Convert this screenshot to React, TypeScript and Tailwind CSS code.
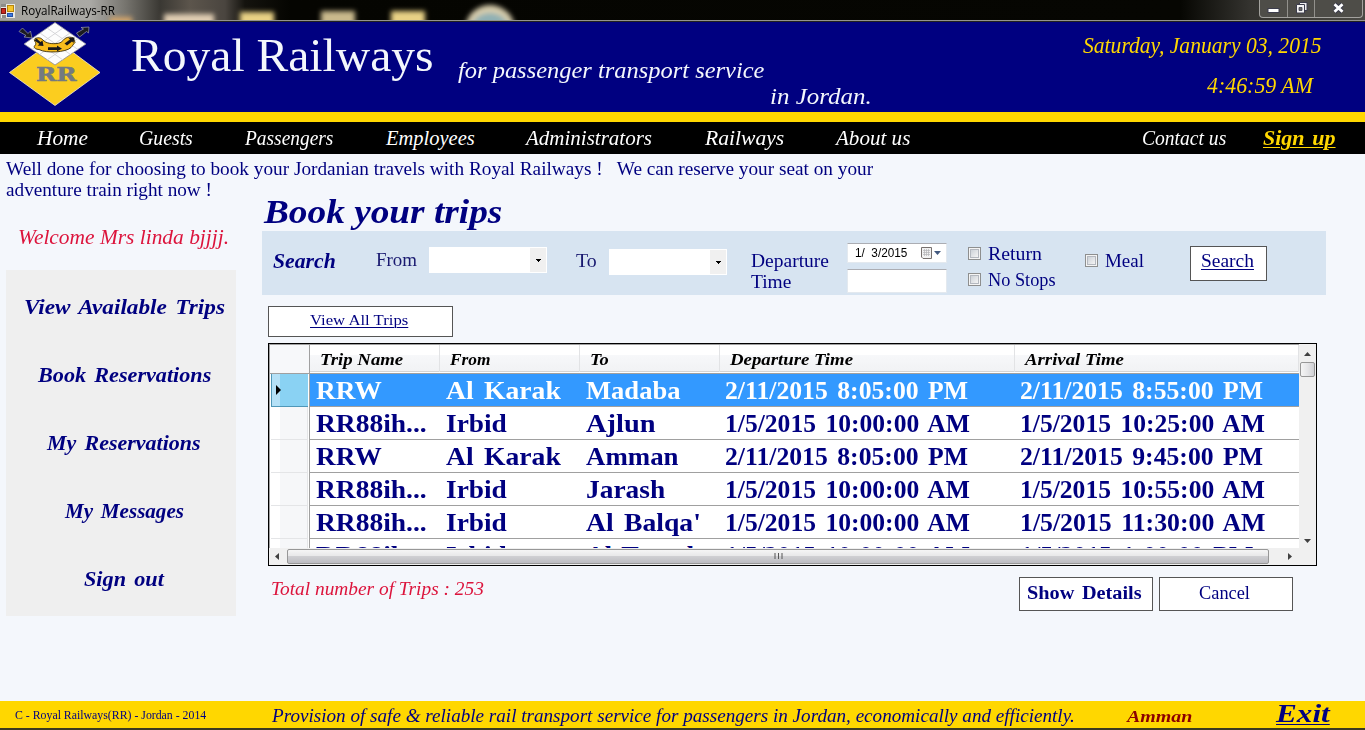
import { useLayoutEffect, useRef, useState } from "react";
import type { ReactNode } from "react";

/* A single line of type, widened or narrowed so that it fills the given measure. */
function Line({ w, className = "", children }: { w: number; className?: string; children: string }) {
  const ref = useRef<HTMLSpanElement>(null);
  const [scale, setScale] = useState(1);
  useLayoutEffect(() => {
    const el = ref.current;
    if (el) setScale(w / el.offsetWidth);
  }, [w, children]);
  return (
    <span className={"block shrink-0 text-left leading-6 whitespace-pre " + className} style={{ width: w }}>
      <span
        ref={ref}
        className="inline-block origin-left align-top [text-decoration:inherit] [text-underline-offset:inherit]"
        style={{ transform: `scaleX(${scale})` }}
      >
        {children}
      </span>
    </span>
  );
}

function AppIcon() {
  return (
    <svg className="ml-px mt-1 h-[14px] w-[14px] shrink-0" viewBox="0 0 14 14">
      <rect width="14" height="14" fill="#e8e8e4" />
      <rect x="0.5" y="4.5" width="4" height="5" fill="#c8281e" stroke="#7a1410" />
      <rect x="6.5" y="1.5" width="6" height="6" fill="#f6c62c" stroke="#b8860b" />
      <rect x="6.5" y="9.5" width="5" height="3" fill="#3a78e0" stroke="#2450a8" />
      <path d="M0 0h5v3H0zM1 11h4v3H1z" fill="#8c8c88" />
    </svg>
  );
}

function Logo() {
  return (
    <svg className="h-[90px] w-[110px] shrink-0" viewBox="0 22 110 90">
      <path d="M55 39L100 72.5L55 105.5L9.5 72.5Z" fill="#fbcd1f" stroke="#f5ecd0" strokeWidth="0.8" />
      <path d="M55 22.5L86 44L55 65L24 44Z" fill="#fdfdfd" stroke="#8a8a96" strokeWidth="0.8" />
      <path
        d="M47 28L78 49.5M40 33L70.5 54.5M32 38.5L63 60M63 28L32 49.5M70 33L39.5 54.5M78 38.5L47 60"
        stroke="#d2d2d6"
        strokeWidth="0.9"
      />
      <path
        d="M35 38.500C39 37 41 38 43 40C46 43.500 52 44 57 43.500C62 43 63 40 65 38.500C68 36.500 71 37 73.500 38L75 42.500C73 44.500 72.500 46 71 47.500C66 52.500 46 53.500 39 49.500C36 49.500 34 48 34 46.500C36 45 36.500 43 34.500 41Z"
        fill="#f9bd1c"
        stroke="#3a2c08"
        strokeWidth="0.9"
      />
      <g fill="#1a1b20" stroke="#b4b4bc" strokeWidth="0.6">
        <path d="M19 31.500L22.500 28L28 33.500L30.500 31L32 38L24 37L26 35.500Z" />
        <path d="M76.500 33L83.500 29L81 27.500L89 27L88.500 33L86.500 31.500L79.500 37Z" />
      </g>
      <g fill="#18181c">
        <path d="M34.500 40.500L36.500 38.500L40.500 42L42.500 40.500L43.500 46L37.500 45.500L39.500 44Z" />
        <path d="M48 47.200H57V45.400L62 48.800L57 51.200V50H48Z" />
        <path d="M64.500 43.500L70 39.500L68.500 38L74.500 37.500L73.500 43L72 41.500L67 45.500Z" />
      </g>
      <text
        x="36"
        y="81"
        textLength="40.5"
        lengthAdjust="spacingAndGlyphs"
        fill="#747a80"
        stroke="#747a80"
        strokeWidth="0.5"
        className="font-['DejaVu_Serif',serif] text-[18px] font-bold"
      >
        RR
      </text>
    </svg>
  );
}

function TitleBar() {
  return (
    <div className="relative flex h-[22px] shrink-0 overflow-hidden border-b border-[#22221e] bg-[linear-gradient(90deg,#a5a49f_0px,#aaa9a5_90px,#77756f_125px,#3a3833_160px,#5c554c_190px,#4a453f_225px,#14130e_245px,#050501_290px,#060602_1180px,#34332f_1250px,#4b4a45_1365px)]">
      <div className="absolute inset-x-0 bottom-0 z-10 h-px bg-[#94948f]" />
      <svg className="absolute top-0 left-0 h-[22px] w-[600px]" viewBox="0 0 600 22">
        <defs>
          <filter id="soft" x="-30%" y="-60%" width="160%" height="220%">
            <feGaussianBlur stdDeviation="2.8" />
          </filter>
        </defs>
        <g filter="url(#soft)">
          <rect x="110" y="17" width="22" height="8" fill="#d3a56a" />
          <rect x="164" y="14" width="50" height="14" fill="#e0cdb2" />
          <rect x="240" y="12" width="34" height="16" fill="#e9d184" />
          <rect x="321" y="11" width="34" height="16" fill="#c9b98c" />
          <rect x="391" y="11" width="34" height="16" fill="#e8d185" />
          <circle cx="490" cy="30" r="25" fill="#d6ccac" />
          <circle cx="490" cy="33" r="20" fill="#8fb0b4" />
        </g>
      </svg>
      <AppIcon />
      <div className="z-10 ml-[6px] font-['Open_Sans',sans-serif] text-[12px] text-black">
        <Line w={94} className="-mt-px">
          RoyalRailways-RR
        </Line>
      </div>
      <div className="z-10 mr-[2px] ml-auto flex h-[18px] w-[104px] shrink-0 rounded-b-[4px] border border-t-0 border-[#a3a29e] bg-[#4e4d48]">
        <div className="flex w-[28px] items-center justify-center border-r border-[#92918c]">
          <svg width="13" height="18" viewBox="0 0 13 18">
            <rect x="1" y="8.5" width="11" height="4" fill="#fff" stroke="#3c3d4c" />
          </svg>
        </div>
        <div className="flex w-[27px] items-center justify-center border-r border-[#92918c]">
          <svg width="13" height="18" viewBox="0 0 13 18">
            <path d="M4.5 2.500h7.500v8h-7.500z" fill="#eee" stroke="#3c3d4c" />
            <path d="M1.500 4.500h8v8.500h-8z" fill="#f4f4f4" stroke="#3c3d4c" />
            <path d="M4 7.500h3v3h-3z" fill="#686862" stroke="#3c3d4c" strokeWidth="0.8" />
          </svg>
        </div>
        <div className="flex flex-1 items-center justify-center">
          <svg width="13" height="18" viewBox="0 0 13 18">
            <path d="M2.500 4L10.500 12M10.500 4L2.500 12" stroke="#3c3d4c" strokeWidth="4.600" />
            <path d="M2.500 4.300L10.500 11.700M10.500 4.300L2.500 11.700" stroke="#fff" strokeWidth="2.800" />
          </svg>
        </div>
      </div>
    </div>
  );
}

function Header() {
  return (
    <header className="flex h-[90px] shrink-0 bg-[#000080] text-[#f4f7fc]">
      <Logo />
      <Line w={303} className="mt-[22px] ml-[21px] text-[46px]">
        Royal Railways
      </Line>
      <div className="ml-[24px] flex w-[420px] flex-col pt-[36px] text-[23.5px] italic">
        <Line w={306}>for passenger transport service</Line>
        <Line w={102} className="mt-[2px] ml-[312px]">
          in Jordan.
        </Line>
      </div>
      <div className="mr-[43px] ml-auto flex flex-col items-end pt-[12px] text-[22.5px] text-[#ffd700] italic">
        <Line w={239}>Saturday, January 03, 2015</Line>
        <Line w={106} className="mt-[16px] mr-[9px]">
          4:46:59 AM
        </Line>
      </div>
    </header>
  );
}

function Nav() {
  return (
    <nav className="flex h-[32px] shrink-0 bg-black pt-[4px] pl-[37px] text-[20.5px] text-white italic">
      <Line w={51}>Home</Line>
      <Line w={54} className="ml-[51px]">Guests</Line>
      <Line w={88} className="ml-[52px]">Passengers</Line>
      <Line w={89} className="ml-[53px]">Employees</Line>
      <Line w={126} className="ml-[51px]">Administrators</Line>
      <Line w={79} className="ml-[53px]">Railways</Line>
      <Line w={74} className="ml-[52px]">About us</Line>
      <Line w={84} className="ml-[232px]">Contact us</Line>
      <Line w={73} className="ml-[37px] font-bold text-[#ffd700] underline decoration-1 underline-offset-2 [word-spacing:0.1em]">
        Sign up
      </Line>
    </nav>
  );
}

const menu = [
  { label: "View Available Trips", w: 201 },
  { label: "Book Reservations", w: 173 },
  { label: "My Reservations", w: 154 },
  { label: "My Messages", w: 119 },
  { label: "Sign out", w: 80 },
];

function Sidebar() {
  return (
    <aside className="flex w-[262px] shrink-0 flex-col">
      <Line w={211} className="mt-[25px] ml-[18px] text-[20px] text-[#dc143c] italic">
        Welcome Mrs linda bjjjj.
      </Line>
      <div className="mt-[21px] ml-[6px] flex h-[346px] w-[230px] flex-col items-center gap-[44px] bg-[#efefef] pt-[25px] pl-[6px] text-[20px] font-bold italic [word-spacing:0.12em]">
        {menu.map((m) => (
          <Line key={m.label} w={m.w}>
            {m.label}
          </Line>
        ))}
      </div>
    </aside>
  );
}

function Combo() {
  return (
    <div className="flex h-[26px] w-[118px] shrink-0 justify-end border border-white bg-white">
      <div className="flex w-[16px] items-center justify-center bg-[#f0f0f0]">
        <svg width="5" height="3" viewBox="0 0 5 3" shapeRendering="crispEdges">
          <path d="M0 0H5V1H4V2H3V3H2V2H1V1H0Z" fill="#000" />
        </svg>
      </div>
    </div>
  );
}

function Check({ label, w }: { label: string; w: number }) {
  return (
    <div className="flex h-[26px] items-start">
      <div className="flex h-[13px] w-[13px] items-center justify-center border border-[#8e8f8f] bg-[#f4f4f4]">
        <div className="h-[9px] w-[9px] border border-[#b4b8bf] bg-[linear-gradient(135deg,#cdd2d8,#f4f4f4)]" />
      </div>
      <Line w={w} className="-mt-[5px] ml-[7px]">
        {label}
      </Line>
    </div>
  );
}

function Button({ className, children }: { className: string; children: ReactNode }) {
  return (
    <button className={"flex shrink-0 border border-[#555] bg-white " + className}>{children}</button>
  );
}

function SearchPanel() {
  return (
    <div className="flex h-[64px] w-[1064px] items-start bg-[#d7e4f1] text-[18px]">
      <Line w={63} className="mt-[18px] ml-[11px] text-[20px] font-bold italic">
        Search
      </Line>
      <Line w={41} className="mt-[17px] mr-[12px] ml-[40px] text-[#191970]">
        From
      </Line>
      <div className="mt-[16px]">
        <Combo />
      </div>
      <Line w={21} className="mt-[18px] mr-[12px] ml-[29px] text-[#191970]">
        To
      </Line>
      <div className="mt-[18px]">
        <Combo />
      </div>
      <div className="mt-[18px] ml-[24px] w-[96px] shrink-0">
        <Line w={78}>Departure</Line>
        <Line w={40} className="-mt-[3px]">
          Time
        </Line>
      </div>
      <div className="mt-[12px] flex w-[100px] shrink-0 flex-col gap-[6px]">
        <div className="flex h-[20px] border border-t-[#abadb3] border-[#e3e9ef] bg-white pl-[7px] font-['Liberation_Sans',sans-serif] text-[12px] text-black">
          <Line w={52} className="-mt-[3px]">
            1/  3/2015
          </Line>
          <svg className="mt-[3px] ml-[14px]" width="22" height="13" viewBox="0 0 22 13">
            <path d="M0.500 0.500h10v11h-8.500l-1.500-1.500z" fill="#f2f2f2" stroke="#76706e" />
            <path d="M2 3.500h7M2 5.500h7M2 7.500h7M3.500 2v7M5.500 2v7M7.500 2v7" stroke="#b4b4b8" strokeWidth="0.700" />
            <path d="M13 4H20L16.500 8Z" fill="#42597f" />
          </svg>
        </div>
        <div className="h-[24px] border border-t-[#abadb3] border-[#e3e9ef] bg-white" />
      </div>
      <div className="mt-[16px] ml-[21px]">
        <Check label="Return" w={54} />
        <Check label="No Stops" w={68} />
      </div>
      <div className="mt-[23px] ml-[29px]">
        <Check label="Meal" w={39} />
      </div>
      <Button className="mt-[15px] ml-[46px] h-[35px] w-[77px] pl-[10px]">
        <Line w={53} className="mt-[2px] underline decoration-1 underline-offset-2">
          Search
        </Line>
      </Button>
    </div>
  );
}

type Cell = [string, number];
const rows: Cell[][] = [
  [["RRW", 66], ["Al Karak", 115], ["Madaba", 94], ["2/11/2015 8:05:00 PM", 243], ["2/11/2015 8:55:00 PM", 243]],
  [["RR88ih...", 111], ["Irbid", 61], ["Ajlun", 70], ["1/5/2015 10:00:00 AM", 245], ["1/5/2015 10:25:00 AM", 245]],
  [["RRW", 66], ["Al Karak", 115], ["Amman", 93], ["2/11/2015 8:05:00 PM", 243], ["2/11/2015 9:45:00 PM", 243]],
  [["RR88ih...", 111], ["Irbid", 61], ["Jarash", 79], ["1/5/2015 10:00:00 AM", 245], ["1/5/2015 10:55:00 AM", 245]],
  [["RR88ih...", 111], ["Irbid", 61], ["Al Balqa'", 115], ["1/5/2015 10:00:00 AM", 245], ["1/5/2015 11:30:00 AM", 245]],
  [["RR88ih...", 111], ["Irbid", 61], ["Al Turrah", 115], ["1/5/2015 10:00:00 AM", 245], ["1/5/2015 1:00:00 PM", 233]],
];
const columns: Cell[] = [
  ["Trip Name", 83],
  ["From", 41],
  ["To", 19],
  ["Departure Time", 123],
  ["Arrival Time", 99],
];
const grid = "grid grid-cols-[130px_140px_140px_295px_284px]";

function TripsTable() {
  return (
    <div className="mt-[6px] ml-[6px] flex h-[223px] w-[1049px] flex-col border border-black bg-[#f0f0f0]">
      <div className="flex h-[204px] shrink-0 overflow-hidden">
        <div className="flex w-[1030px] shrink-0 flex-col border-t border-l border-[#a0a0a0] bg-white">
          <div className="flex h-[29px] shrink-0 border-b border-[#a0a0a0]">
            <div className="w-[40px] shrink-0 border-r border-[#a0a0a0] bg-[#f7f8fa]" />
            <div
              className={
                grid +
                " h-[27px] border-b border-[#d5d5d5] bg-[linear-gradient(180deg,#fff_0,#fff_10px,#f7f8fa_10px,#f1f2f4_27px)] text-[16.5px] font-bold text-black italic"
              }
            >
              {columns.map(([label, w]) => (
                <div key={label} className="border-r border-[#e2e3e5] pl-[10px]">
                  <Line w={w} className="mt-[3px]">
                    {label}
                  </Line>
                </div>
              ))}
            </div>
          </div>
          {rows.map((row, i) => (
            <div key={i} className="flex h-[33px] shrink-0">
              <div className="flex w-[40px] shrink-0 items-stretch border-r border-[#a0a0a0] bg-white pl-[1px]">
                {i === 0 ? (
                  <div className="flex w-[37px] items-center border-b border-l border-[#4f97b8] bg-[linear-gradient(90deg,#b5e1f7_0,#b5e1f7_8px,#8ad2f3_8px)] pl-[4px]">
                    <svg width="5" height="10" viewBox="0 0 5 10">
                      <path d="M0 0L5 5L0 10Z" fill="#000" />
                    </svg>
                  </div>
                ) : (
                  <div className="w-[37px] border-r border-b border-[#e4e5e7] bg-[linear-gradient(90deg,#fff_0,#fff_9px,#f6f7f9_9px)]" />
                )}
              </div>
              <div
                className={
                  i === 0
                    ? grid + " border-b border-[#a0a0a0] bg-[#3399ff] text-[26px] font-bold text-white [word-spacing:0.12em]"
                    : grid + " border-b border-[#a0a0a0] bg-white text-[26px] font-bold [word-spacing:0.12em]"
                }
              >
                {row.map(([label, w], j) => (
                  <div key={j} className={j > 2 ? "pl-[5px]" : "pl-[6px]"}>
                    <Line w={w} className="mt-[5px]">
                      {label}
                    </Line>
                  </div>
                ))}
              </div>
            </div>
          ))}
        </div>
        <div className="flex flex-1 flex-col items-center bg-[#f0f0f0] pt-[8px] pb-[5px]">
          <svg width="7" height="4" viewBox="0 0 7 4">
            <path d="M0 4L3.500 0L7 4Z" fill="#404040" />
          </svg>
          <div className="mt-[6px] h-[15px] w-[15px] rounded-[2px] border border-[#979797] bg-[linear-gradient(90deg,#f5f5f5,#e6e6e8_50%,#cfd0d4)]" />
          <svg className="mt-auto" width="7" height="4" viewBox="0 0 7 4">
            <path d="M0 0H7L3.500 4Z" fill="#404040" />
          </svg>
        </div>
      </div>
      <div className="flex h-[17px] items-center pr-[24px] pl-[6px]">
        <svg width="4" height="7" viewBox="0 0 4 7">
          <path d="M4 0V7L0 3.500Z" fill="#404040" />
        </svg>
        <div className="ml-[8px] flex h-[15px] w-[982px] items-center justify-center rounded-[2px] border border-[#979797] bg-[linear-gradient(180deg,#f5f5f5_0,#e8e8e9_45%,#cfcfd2_50%,#bdbdc2)]">
          <svg width="9" height="7" viewBox="0 0 9 7">
            <path d="M1 0V6M4.500 0V6M8 0V6" stroke="#555" />
          </svg>
        </div>
        <svg className="ml-auto" width="4" height="7" viewBox="0 0 4 7">
          <path d="M0 0V7L4 3.500Z" fill="#404040" />
        </svg>
      </div>
    </div>
  );
}

function Booking() {
  return (
    <section className="flex flex-1 flex-col">
      <div className="h-[31px] pl-[2px]">
        <Line w={238} className="text-[34px] font-bold italic">
          Book your trips
        </Line>
      </div>
      <SearchPanel />
      <Button className="mt-[11px] ml-[6px] h-[31px] w-[185px] pl-[41px]">
        <Line w={98} className="mt-[1px] text-[15.5px] underline decoration-1 underline-offset-2">
          View All Trips
        </Line>
      </Button>
      <TripsTable />
      <div className="mt-[11px] flex text-[18px]">
        <Line w={213} className="ml-[9px] text-[#dc143c] italic">
          Total number of Trips : 253
        </Line>
        <Button className="ml-[535px] h-[34px] w-[134px] pl-[7px]">
          <Line w={115} className="mt-[3px] font-bold [word-spacing:0.12em]">
            Show Details
          </Line>
        </Button>
        <Button className="ml-[6px] h-[34px] w-[134px] pl-[39px]">
          <Line w={51} className="mt-[3px]">
            Cancel
          </Line>
        </Button>
      </div>
    </section>
  );
}

function Footer() {
  return (
    <footer className="flex h-[29px] shrink-0 border-b-2 border-[#3b3a20] bg-[#ffd700] pl-[15px]">
      <Line w={191} className="mt-[2px] text-[11.5px]">
        C - Royal Railways(RR) - Jordan - 2014
      </Line>
      <Line w={803} className="mt-[3px] ml-[66px] text-[18px] italic">
        Provision of safe & reliable rail transport service for passengers in Jordan, economically and efficiently.
      </Line>
      <Line w={65} className="mt-[3px] ml-[52px] text-[17.5px] font-bold text-[#8b0000] italic">
        Amman
      </Line>
      <Line w={54} className="mt-px ml-[84px] text-[26px] font-bold italic underline decoration-1 underline-offset-2">
        Exit
      </Line>
    </footer>
  );
}

export default function App() {
  return (
    <div className="flex h-[730px] w-[1365px] flex-col overflow-hidden bg-[#f4f7fc] font-['Liberation_Serif',serif] text-[#000080]">
      <TitleBar />
      <Header />
      <div className="h-[10px] shrink-0 bg-[#ffd700]" />
      <Nav />
      <div className="flex h-[46px] shrink-0 flex-col pt-[3px] pl-[6px] text-[18px]">
        <Line w={867}>
          Well done for choosing to book your Jordanian travels with Royal Railways !   We can reserve your seat on your
        </Line>
        <Line w={206} className="-mt-[3px]">
          adventure train right now !
        </Line>
      </div>
      <main className="flex min-h-0 flex-1">
        <Sidebar />
        <Booking />
      </main>
      <Footer />
    </div>
  );
}
